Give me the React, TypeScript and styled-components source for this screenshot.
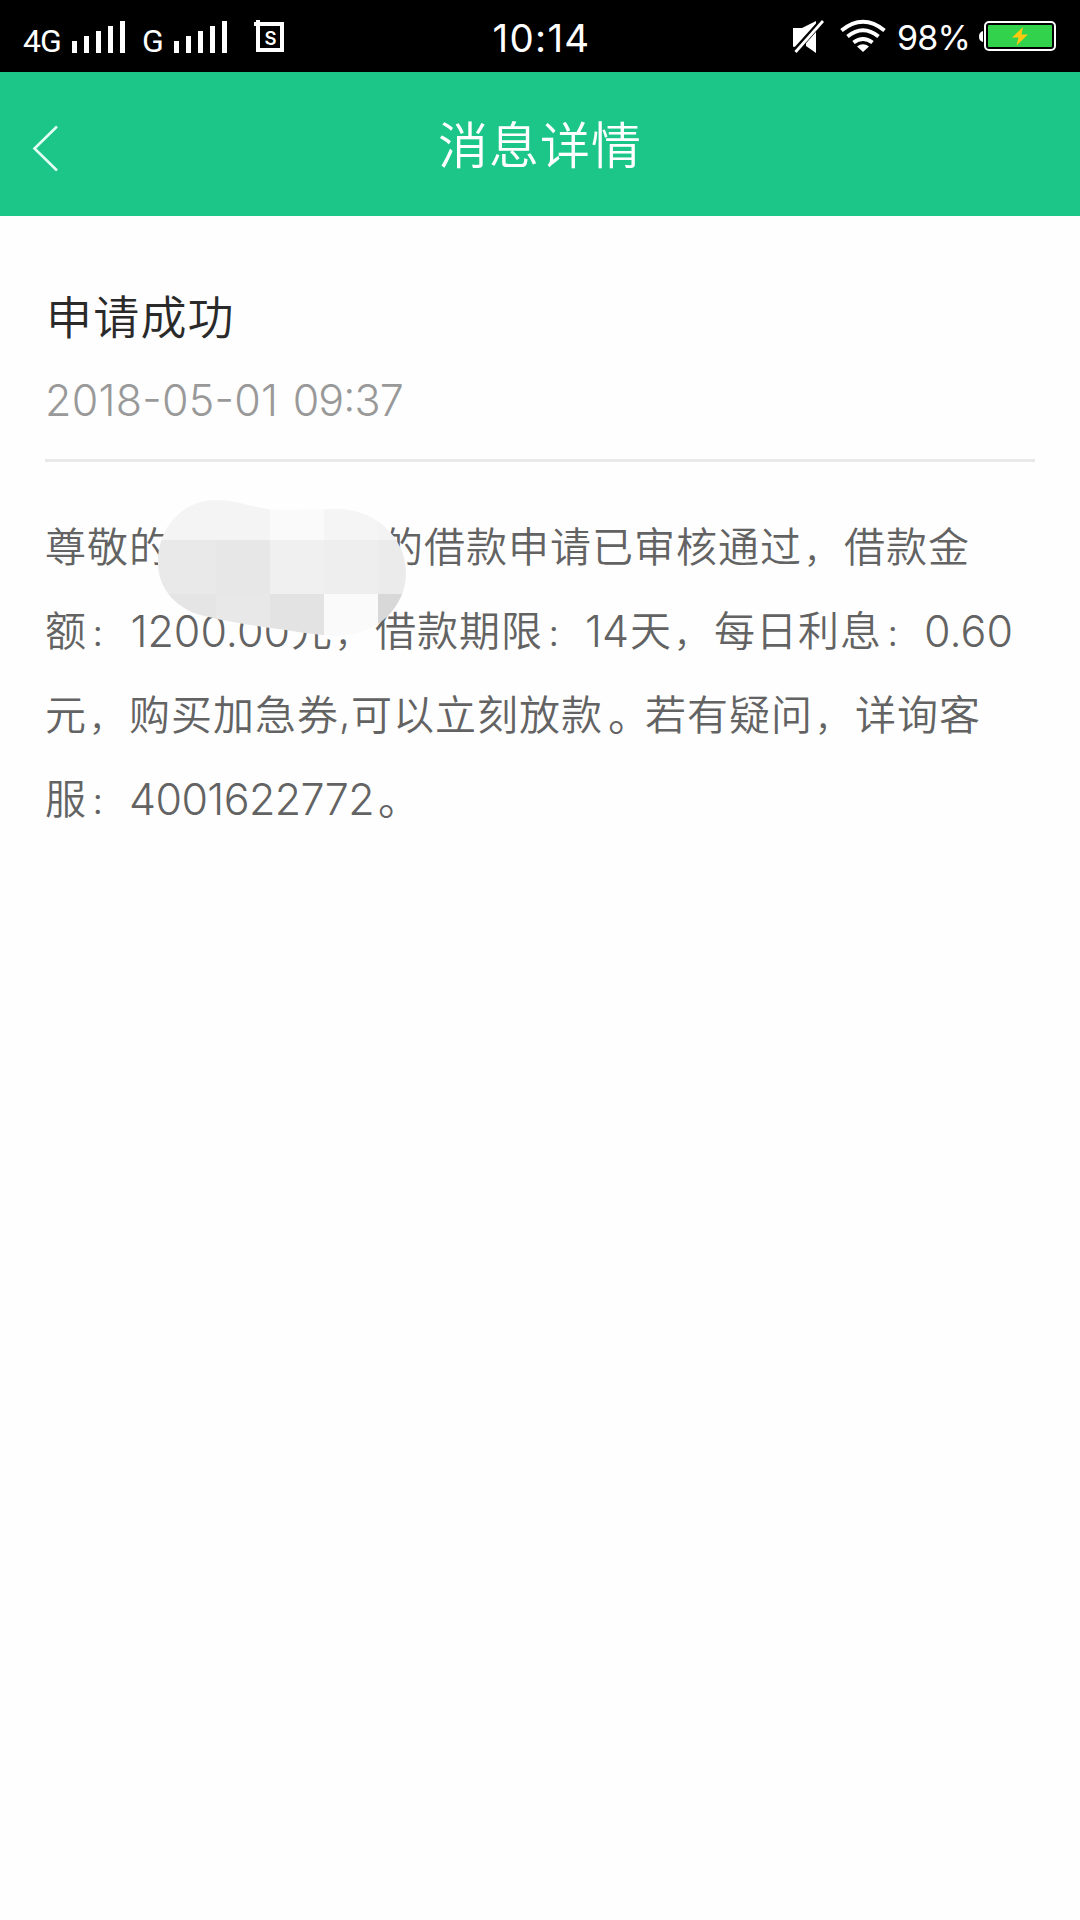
import React from "react";
import styled, { createGlobalStyle } from "styled-components";

const GlobalStyle = createGlobalStyle`
  * { box-sizing: border-box; }
  body { margin: 0; background: #fefefe; }
`;

const latin = `Inter, "Noto Sans CJK SC", sans-serif`;
const cjk = `"Noto Sans CJK SC", Inter, sans-serif`;

const Screen = styled.div`
  width: 1080px;
  height: 1920px;
  display: flex;
  flex-direction: column;
  background: #fefefe;
  overflow: hidden;
`;

const StatusBar = styled.header`
  height: 72px;
  flex: none;
  display: grid;
  grid-template-columns: 1fr auto 1fr;
  padding: 0 23px;
  background: #000;
  color: #fff;
`;

const StatusGroup = styled.div<{ $end?: boolean }>`
  display: flex;
  align-items: flex-start;
  justify-content: ${(p) => (p.$end ? "flex-end" : "flex-start")};
`;

const StatusText = styled.span<{ $size: number; $top: number; $track?: number }>`
  font-family: ${latin};
  font-size: ${(p) => p.$size}px;
  line-height: 40px;
  margin-top: ${(p) => p.$top}px;
  letter-spacing: ${(p) => p.$track ?? 0}px;
  white-space: nowrap;
`;

const TimeNow = styled(StatusText)`
  padding-left: 3px;
`;

const Network = styled.span<{ $width: number }>`
  flex: none;
  width: ${(p) => p.$width}px;
  margin-top: 21px;
  font: 400 32px/40px Roboto, sans-serif;
  letter-spacing: -1px;
`;

const Percent = styled(StatusText)`
  flex: none;
  width: 82px;
  margin-left: 10px;
`;

const Bars = styled.div`
  display: flex;
  align-items: flex-end;
  gap: 7px;
  height: 53px;
  margin-right: 17px;
`;

const Bar = styled.i<{ $height: number }>`
  width: 5px;
  height: ${(p) => p.$height}px;
  background: #fff;
`;

const Glyph = styled.svg<{ $left?: number }>`
  display: block;
  flex: none;
  margin-left: ${(p) => p.$left ?? 0}px;
`;

const NavBar = styled.nav`
  height: 144px;
  flex: none;
  display: grid;
  grid-template-columns: 90px 1fr 90px;
  background: #1bc688;
  color: #fff;
`;

const BackButton = styled.button`
  border: 0;
  padding: 0;
  background: none;
  color: inherit;
`;

const NavTitle = styled.h1`
  margin: 0;
  text-align: center;
  font: 350 50px/141px ${cjk};
  letter-spacing: 1px;
`;

const Article = styled.main`
  padding: 63px 45px 0;
`;

const Heading = styled.h2`
  margin: 0;
  padding-left: 1px;
  font: 350 46px/70px ${cjk};
  letter-spacing: 1.2px;
  color: #2a2a2a;
`;

const Time = styled.time`
  display: flex;
  gap: 14.5px;
  margin-top: 16px;
  font: 300 43px/70px ${latin};
  font-feature-settings: "case";
  letter-spacing: 0.25px;
  color: #999;
`;

const Clock = styled.span`
  letter-spacing: -0.9px;
`;

const Divider = styled.hr`
  height: 3px;
  margin: 24px 0 0;
  border: 0;
  background: #e9e9e9;
`;

const Message = styled.div`
  position: relative;
  margin-top: 40px;
  font: 350 41px/84px ${cjk};
  letter-spacing: 1px;
  color: #636363;
`;

const Line = styled.p`
  display: flex;
  height: 84px;
  margin: 0;
  white-space: nowrap;
`;

const Num = styled.span<{ $width: number; $track?: number; $left?: number }>`
  flex: none;
  width: ${(p) => p.$width}px;
  padding: 3px 0 0 ${(p) => p.$left ?? 0}px;
  font-family: ${latin};
  font-size: 43px;
  font-weight: 300;
  letter-spacing: ${(p) => p.$track ?? 0}px;
`;

const HalfComma = styled.span`
  flex: none;
  width: 12px;
  font-family: ${latin};
`;

const marks = {
  "：": { size: 29, left: 3.5, top: 4.5 },
  "，": { size: 34, left: 2, top: 5 },
  "。": { size: 42, left: 5, top: 1 },
};

const Mark = styled.span<{ $size: number; $left: number; $top: number }>`
  flex: none;
  width: 42px;
  padding: ${(p) => p.$top}px 0 0 ${(p) => p.$left}px;
  font-size: ${(p) => p.$size}px;
`;

const NameGap = styled.span`
  flex: none;
  width: 211px;
`;

const Mosaic = styled.svg`
  position: absolute;
  left: 113px;
  top: -2px;
`;

const Signal = () => (
  <Bars>
    {[12, 17, 22, 27, 32].map((h) => (
      <Bar key={h} $height={h} />
    ))}
  </Bars>
);

const Punct = ({ c }: { c: keyof typeof marks }) => (
  <Mark $size={marks[c].size} $left={marks[c].left} $top={marks[c].top}>
    {c}
  </Mark>
);

const tiles: [number, number, number, number, string][] = [
  [150, 490, 120, 50, "#f4f4f4"],
  [270, 490, 54, 50, "#fafafa"],
  [324, 490, 54, 50, "#f5f5f5"],
  [378, 490, 40, 50, "#f3f3f3"],
  [150, 540, 66, 54, "#e9e9e9"],
  [216, 540, 54, 54, "#e7e7e7"],
  [270, 540, 54, 54, "#f0f0f0"],
  [324, 540, 54, 54, "#eeeeee"],
  [378, 540, 40, 54, "#ebebeb"],
  [150, 594, 66, 50, "#e5e5e5"],
  [216, 594, 54, 50, "#e8e8e8"],
  [270, 594, 54, 50, "#e3e3e3"],
  [324, 594, 54, 50, "#fafafa"],
  [378, 594, 40, 50, "#d8d8d8"],
];

export default function App() {
  return (
    <Screen>
      <GlobalStyle />
      <StatusBar>
        <StatusGroup>
          <Network $width={49}>4G</Network>
          <Signal />
          <Network $width={32}>G</Network>
          <Signal />
          <Glyph $left={10} width="30" height="72" viewBox="254 0 30 72">
            <path d="M258 20V50H282V24H254" fill="none" stroke="#fff" strokeWidth="4" />
            <text x="270.6" y="45" textAnchor="middle" fill="#fff" fontFamily="Inter, sans-serif" fontWeight="600" fontSize="18.5">S</text>
          </Glyph>
        </StatusGroup>
        <TimeNow $size={38.5} $top={18} $track={1.3}>10:14</TimeNow>
        <StatusGroup $end>
          <Glyph width="32" height="72" viewBox="792 0 32 72">
            <path d="M793 28H802L816 21V23.500L795 46.700H793ZM816 32V53L806 46V43.200Z" fill="#fff" />
            <path d="M795.5 52L823 21" stroke="#fff" strokeWidth="2.800" />
          </Glyph>
          <Glyph $left={15} width="48" height="72" viewBox="839 0 48 72">
            <g fill="none" stroke="#fff" strokeWidth="4">
              <path d="M841.5 30.5Q863 13 884.500 30.5" />
              <path d="M847.500 36.5Q863 24 878.500 36.5" />
              <path d="M853.500 42.500Q863 35.500 872.500 42.500" />
            </g>
            <path d="M857 46.500Q863 42 869 46.500L863 52Z" fill="#fff" />
          </Glyph>
          <Percent $size={34} $top={18} $track={-0.8}>98%</Percent>
          <Glyph width="78" height="72" viewBox="979 0 78 72">
            <path d="M983 31V42Q979 41 979 36.500T983 31Z" fill="#fff" />
            <rect x="985" y="22" width="70" height="28" rx="4" fill="none" stroke="#fff" strokeWidth="2" />
            <rect x="988" y="25" width="64" height="22" rx="1" fill="#32d24d" />
            <path d="M1023 27L1012 37.500H1018.500L1016.500 45.500L1028 34.500H1021.500Z" fill="#fbc90f" />
          </Glyph>
        </StatusGroup>
      </StatusBar>
      <NavBar>
        <BackButton aria-label="返回">
          <Glyph width="90" height="144" viewBox="0 72 90 144">
            <path d="M57 126.500L34.500 148.500L57 170.500" fill="none" stroke="#e4fff5" strokeWidth="2.6" />
          </Glyph>
        </BackButton>
        <NavTitle>消息详情</NavTitle>
      </NavBar>
      <Article>
        <Heading>申请成功</Heading>
        <Time>
          <span>2018-05-01</span>
          <Clock>09:37</Clock>
        </Time>
        <Divider />
        <Message>
          <Line>尊敬的<NameGap />的借款申请已审核通过<Punct c="，" />借款金</Line>
          <Line>
            额<Punct c="：" /><Num $width={162} $left={1.5}>1200.00</Num>元<Punct c="，" />借款期限<Punct c="：" />
            <Num $width={45}>14</Num>天<Punct c="，" />每日利息<Punct c="：" /><Num $width={90}>0.60</Num>
          </Line>
          <Line>
            元<Punct c="，" />购买加急券<HalfComma>,</HalfComma>可以立刻放款<Punct c="。" />若有疑问<Punct c="，" />详询客
          </Line>
          <Line>
            服<Punct c="：" /><Num $width={244} $track={-0.6}>4001622772</Num><Punct c="。" />
          </Line>
          <Mosaic width="248" height="136" viewBox="158 500 248 136">
            <clipPath id="smear">
              <path d="M158 560C159 524 186 500 215 500C234 500 250 506 267 509C285 511 310 509 337 509C376 509 406 538 406 573C406 608 376 636 336 636C310 635 292 630 270 628C245 624 222 621 197 614C172 605 157 585 158 560Z" />
            </clipPath>
            <g clipPath="url(#smear)" shapeRendering="crispEdges">
              {tiles.map(([x, y, w, h, c]) => (
                <rect key={`${x}-${y}`} x={x} y={y} width={w} height={h} fill={c} />
              ))}
            </g>
          </Mosaic>
        </Message>
      </Article>
    </Screen>
  );
}
